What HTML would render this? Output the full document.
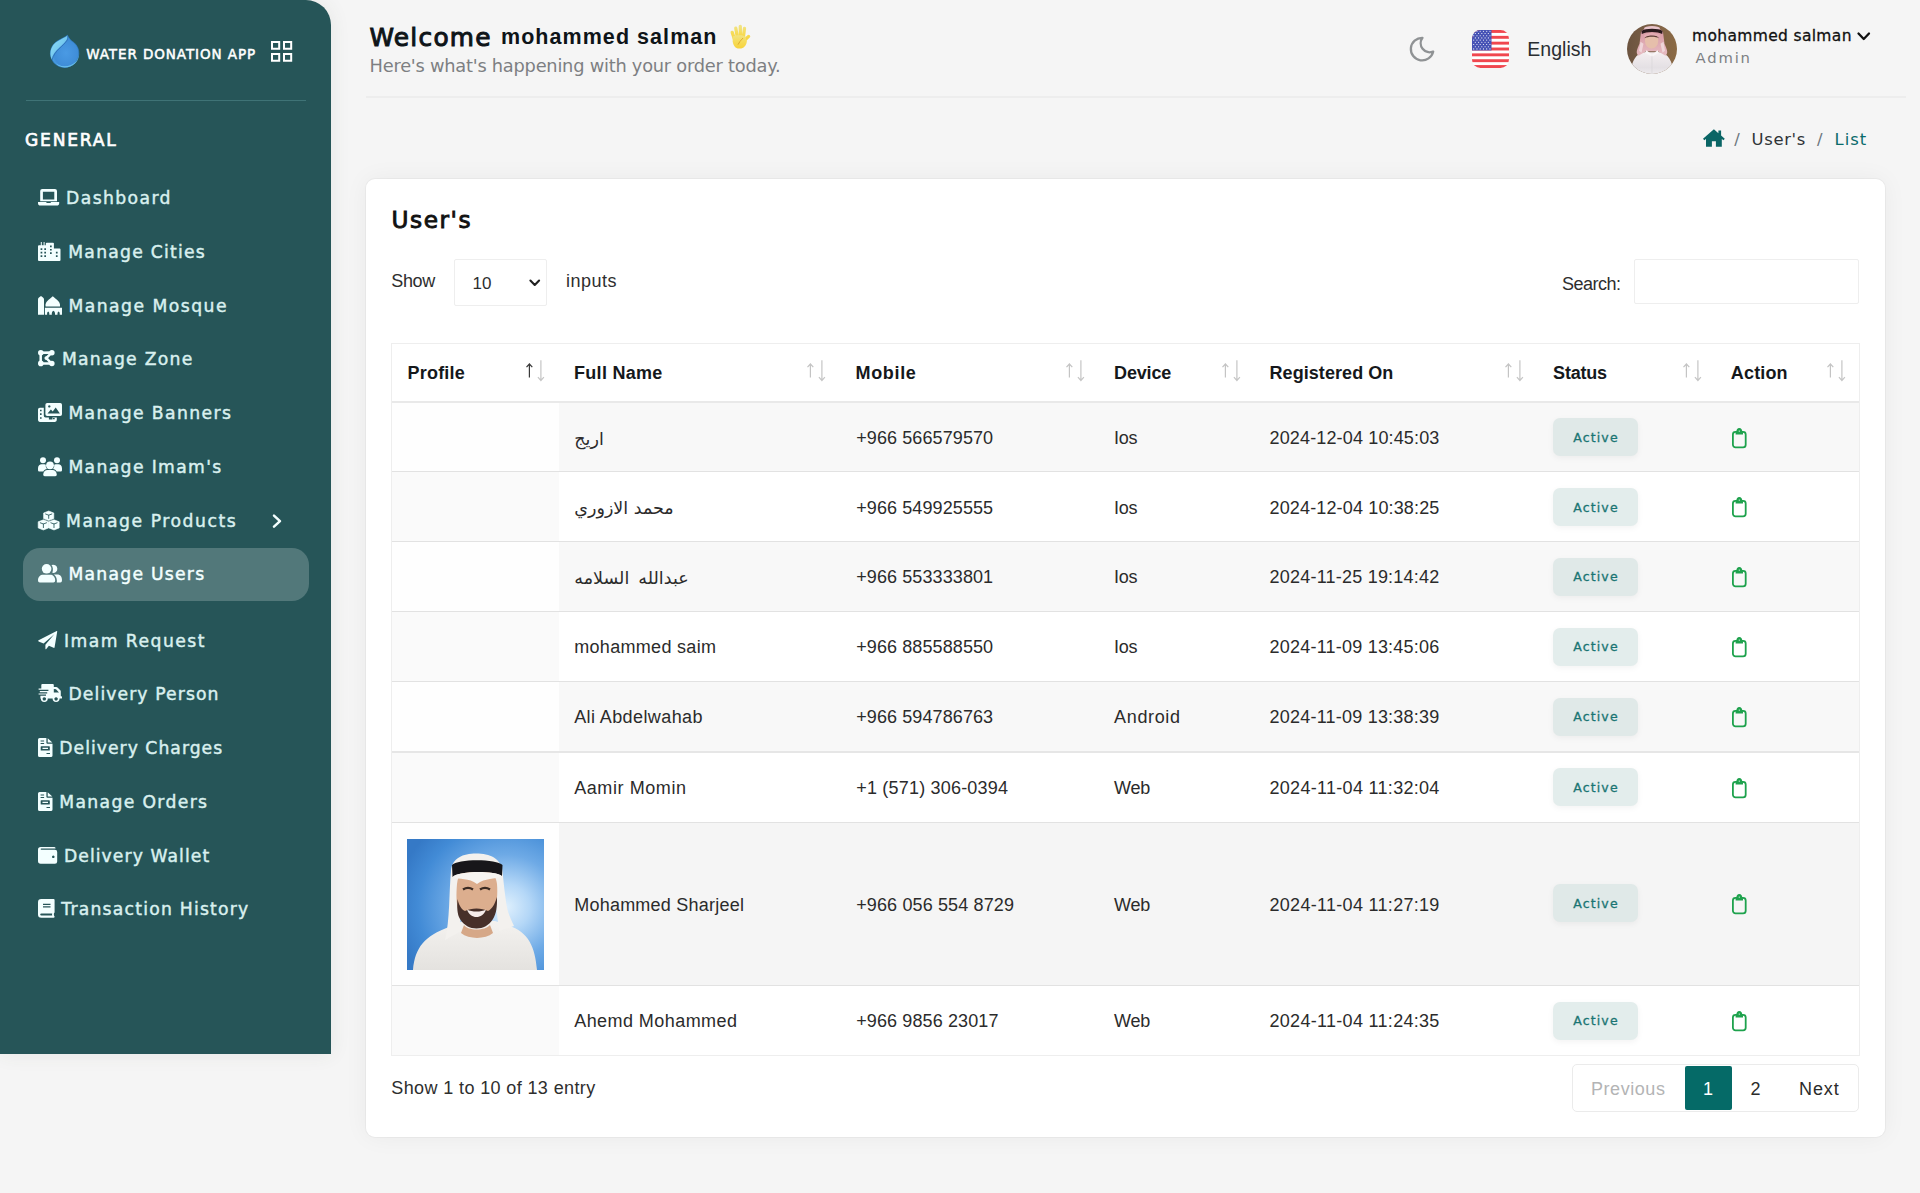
<!DOCTYPE html>
<html lang="en">
<head>
<meta charset="utf-8">
<title>User's List</title>
<style>
*{box-sizing:border-box;margin:0;padding:0}
html,body{width:1920px;height:1193px;overflow:hidden}
body{background:#f5f5f5;font-family:"Liberation Sans","DejaVu Sans",sans-serif;color:#212529;position:relative}
.a{position:absolute;display:block}
.t{position:absolute;white-space:nowrap;display:block}
svg{position:absolute;display:block;overflow:visible}
#sidebar{left:0;top:0;width:331px;height:1054px;background:#265558;border-top-right-radius:25px;box-shadow:0 0 20px rgba(70,80,60,.085)}
#side-hr{left:26px;top:100px;width:280px;height:1px;background:#3f7376}
#pill{left:23px;top:548px;width:286px;height:53px;border-radius:17px;background:#52787a}
.logo{font-family:"DejaVu Sans","Liberation Sans",sans-serif;font-size:13.5px;line-height:16px;font-weight:400;-webkit-text-stroke:.5px #fff;color:#fff}
.gen{font-family:"DejaVu Sans","Liberation Sans",sans-serif;font-size:17.1px;line-height:22px;font-weight:400;-webkit-text-stroke:.65px #fff;color:#fff}
.menu{font-family:"DejaVu Sans","Liberation Sans",sans-serif;font-size:17.2px;line-height:24px;color:#d9f0ef;-webkit-text-stroke:.45px #d9f0ef}
.menu.on{color:#f2ffff;-webkit-text-stroke:.45px #f2ffff}
.ic{fill:#f3ffff}
.welcome{font-family:"DejaVu Sans","Liberation Sans",sans-serif;font-size:24.8px;line-height:32px;font-weight:400;-webkit-text-stroke:1px #0e1418;color:#0e1418}
.wname{font-size:21.5px;line-height:28px;font-weight:700;color:#0e1418}
.wsub{font-family:"DejaVu Sans","Liberation Sans",sans-serif;font-size:17.8px;line-height:22px;color:#7d7f82}
#head-hr{left:366px;top:96px;width:1540px;height:2px;background:#ededed}
.eng{font-size:19.5px;line-height:24px;color:#2a2e31}
.uname{font-family:"DejaVu Sans","Liberation Sans",sans-serif;font-size:15.5px;line-height:20px;color:#111;-webkit-text-stroke:.3px #111}
.urole{font-family:"DejaVu Sans","Liberation Sans",sans-serif;font-size:14.8px;line-height:18px;color:#7d8083}
.bc{font-family:"DejaVu Sans","Liberation Sans",sans-serif;font-size:16.4px;line-height:20px;color:#2f3337}
.bc.on{color:#0a6b6b}
#card{left:366px;top:179px;width:1519px;height:958px;background:#fff;border-radius:9px;box-shadow:0 0 0 1px rgba(0,0,0,.03),0 0 24px rgba(0,0,0,.05)}
.ctitle{font-family:"DejaVu Sans","Liberation Sans",sans-serif;font-size:23.2px;line-height:30px;font-weight:400;-webkit-text-stroke:.9px #111;color:#111}
.lbl{font-size:18px;line-height:22px;color:#2e2e2e}
.box{border:1px solid #eeeeee;border-radius:2px;background:#fff}
#tbl{left:391px;top:343px;width:1469px;height:713px;border:1px solid #eeeeee;background:#fff}
.row{left:392px;width:1467px}
.row.o{background:#f8f8f8}
.row.e{background:#fff}
.row i{position:absolute;left:0;top:0;width:167px;height:100%}
.row.o i{background:#fefefe}
.row.e i{background:#fafafa}
.ln{left:392px;width:1467px;height:1px;background:#e2e2e2}
.th{font-size:18px;line-height:22px;font-weight:700;color:#15181b}
.td{font-size:18px;line-height:22px;color:#2b2b2b}
.ar{font-family:"DejaVu Sans","Liberation Sans",sans-serif;font-size:17.5px;line-height:22px;color:#2b2b2b}
.badge{width:85px;height:38px;border-radius:7px;background:#e3edec;box-shadow:0 2px 6px rgba(0,0,0,.05)}
.badge.d{background:#e0e9e8}
.act{font-family:"DejaVu Sans","Liberation Sans",sans-serif;font-size:12.5px;line-height:16px;color:#1a7573;-webkit-text-stroke:.3px #1a7573}
.pg{font-size:18px;line-height:22px;color:#2b2b2b}
.pg.dis{color:#b3b4b5}
.pg.w{color:#fff}
#pager{left:1571.5px;top:1064px;width:287px;height:48px;border:1px solid #ebebeb;border-radius:5px;background:#fff}
#pg1{left:1684.5px;top:1065.5px;width:47px;height:44.5px;background:#056a67;border-radius:2px}

</style>
</head>
<body>
<aside>
<div id="sidebar" class="a"></div>
<div id="side-hr" class="a"></div>
<div id="pill" class="a"></div>
<svg class="" style="left:49.5px;top:35px" width="29.5" height="33" viewBox="0 0 29.5 33" ><defs>
<radialGradient id="lg1" cx="0.55" cy="0.55" r="0.7"><stop offset="0" stop-color="#4a9ae4"/><stop offset="0.6" stop-color="#3f8dd8"/><stop offset="1" stop-color="#5dbdec"/></radialGradient>
<linearGradient id="lg2" x1="0" y1="0" x2="1" y2="1"><stop offset="0" stop-color="#93def6"/><stop offset="1" stop-color="#5ab6e8"/></linearGradient>
</defs>
<path d="M17.500 0.300C15.500 2 12 3.500 8 5.700A14.200 14.200 0 1 0 21.600 5.900C19.600 4 18.300 2.300 17.500 0.300z" fill="url(#lg1)" stroke="#2f7cc4" stroke-width=".7"/>
<path d="M17.300 0.700C15.300 2.300 12 3.700 8.100 5.900A14.200 14.200 0 0 0 1.700 24.200C3.600 15.600 12.600 11.100 16.500 5.100 17.400 3.600 17.700 2.100 17.300 0.700z" fill="url(#lg2)"/>
<path d="M17.600 1.300C18 3 17.600 4.300 16.900 5.500 13.300 11.300 4.300 15.500 2.100 24.800" fill="none" stroke="#2a66a8" stroke-width=".9" opacity=".75"/>
<path d="M4.600 27C8.500 32.500 20.500 33 26.500 26 27.800 24 28.600 21.500 28.800 19 29.300 27 22.500 32.400 14.700 32.400 10.500 32.400 6.800 30.500 4.600 27z" fill="#79d2f3" opacity=".75"/></svg>
<span class="t logo" style="left:86.2px;top:46.1px;letter-spacing:0.92px;">WATER DONATION APP</span>
<svg class="" style="left:271px;top:41px" width="21.2" height="20.8" viewBox="0 0 21.2 20.2" preserveAspectRatio="none"><path d="M0 0h9.2v8.600H0zM2 2v4.600h5.200V2zM12 0h9.200v8.600H12zM14 2v4.600h5.200V2zM0 11.600h9.200v8.600H0zM2 13.600v4.600h5.200v-4.600zM12 11.600h9.200v8.600H12zM14 13.600v4.600h5.200v-4.600z" fill="#fff" fill-rule="evenodd"/></svg>
<span class="t gen" style="left:25.1px;top:128.8px;letter-spacing:1.76px;">GENERAL</span>
<span class="t menu" style="left:66.1px;top:185.9px;letter-spacing:1.39px;">Dashboard</span>
<span class="t menu" style="left:68.3px;top:239.5px;letter-spacing:1.24px;">Manage Cities</span>
<span class="t menu" style="left:68.4px;top:293.5px;letter-spacing:1.48px;">Manage Mosque</span>
<span class="t menu" style="left:61.9px;top:346.9px;letter-spacing:1.30px;">Manage Zone</span>
<span class="t menu" style="left:68.4px;top:400.7px;letter-spacing:1.39px;">Manage Banners</span>
<span class="t menu" style="left:68.4px;top:454.5px;letter-spacing:1.36px;">Manage Imam&#39;s</span>
<span class="t menu" style="left:66.1px;top:508.5px;letter-spacing:1.55px;">Manage Products</span>
<span class="t menu on" style="left:68.4px;top:561.9px;letter-spacing:1.26px;">Manage Users</span>
<span class="t menu" style="left:63.9px;top:628.5px;letter-spacing:1.48px;">Imam Request</span>
<span class="t menu" style="left:68.5px;top:681.9px;letter-spacing:1.10px;">Delivery Person</span>
<span class="t menu" style="left:59.3px;top:735.9px;letter-spacing:1.03px;">Delivery Charges</span>
<span class="t menu" style="left:59.3px;top:789.5px;letter-spacing:1.35px;">Manage Orders</span>
<span class="t menu" style="left:63.9px;top:843.5px;letter-spacing:1.09px;">Delivery Wallet</span>
<span class="t menu" style="left:61.2px;top:896.9px;letter-spacing:1.23px;">Transaction History</span>
<svg class="" style="left:272.2px;top:514.3px" width="10.6" height="14.3" viewBox="0 0 10.6 14.3" ><path d="M2 1.600l6 5.550-6 5.550" fill="none" stroke="#f3ffff" stroke-width="2.500" stroke-linecap="round" stroke-linejoin="round"/></svg>
<svg class="ic" style="left:38.2px;top:188.9px" width="21.2" height="16.5" viewBox="0 0 21.2 16.5" ><path fill-rule="evenodd" d="M4.300 0h12.600a2.100 2.100 0 0 1 2.100 2.100V12.300H2.200V2.100A2.100 2.100 0 0 1 4.300 0zM4.900 2.700v7.900h11.400V2.700zM0 13h8l.9 1.100h3.400l.9-1.100h8v.9a2.600 2.600 0 0 1-2.600 2.600H2.600A2.600 2.600 0 0 1 0 13.900z"/></svg>
<svg class="ic" style="left:38.2px;top:241.5px" width="23.5" height="19" viewBox="0 0 23.5 19" ><path fill-rule="evenodd" d="M2.800 0h1v3.300h1.800V0h1v3.300h1.200V1.600q0-.9.900-.9h6.300q.9 0 .9.900v5h5.700q.9 0 .9.900V18q0 1-1 1H1q-1 0-1-1V4.300q0-1 1-1h1.800zM2.600 6.300v1.700h1.700V6.300zM6.300 6.300v1.700H8V6.300zM12 3.600v1.700h1.700V3.600zM12 6.900v1.700h1.700V6.900zM2.600 9.800v1.700h1.700V9.800zM6.300 9.800v1.700H8V9.800zM12 10.200v1.700h1.700v-1.700zM17.900 9.800v1.700h1.700V9.800zM2.600 13.300V15h1.700v-1.700zM6.300 13.300V15H8v-1.700zM17.900 13.300V15h1.700v-1.700z"/></svg>
<svg class="ic" style="left:38.2px;top:295.6px" width="24" height="18.8" viewBox="0 0 24 18.8" ><path fill-rule="evenodd" d="M0 18.800V3.600C0 1.700 1.700.900 3 0 4.300.900 6 1.700 6 3.600V18.800zM7.600 10.400C6.800 6 10.900 3.700 14.800.300c3.900 3.400 8 5.700 7.200 10.100zM6.900 11.700h17.100v7.100h-2.300v-1.400q0-1.200-1.100-1.900-1.100.700-1.100 1.900v1.400h-2.500v-1.600q0-1.600-1.600-2.500-1.600.900-1.600 2.500v1.600h-2.500v-1.400q0-1.200-1.100-1.900-1.100.700-1.100 1.900v1.400H6.900z"/></svg>
<svg class="ic" style="left:38.2px;top:350px" width="16.8" height="16.2" viewBox="0 0 16.8 16.2" ><g fill="none" stroke="#f3ffff" stroke-width="2.500"><path d="M2.700 2.800V13.400M2.700 2.700L13.800 2.500M13.700 2.600L8.300 8.100L13.700 13.600M2.700 13.500H13.800"/></g><circle cx="2.800" cy="2.800" r="2.800"/><circle cx="13.900" cy="2.700" r="2.700"/><circle cx="2.800" cy="13.400" r="2.800"/><circle cx="13.900" cy="13.500" r="2.700"/><circle cx="8.400" cy="8.100" r="1.900"/></svg>
<svg class="ic" style="left:38.2px;top:402.6px" width="24" height="18.9" viewBox="0 0 24 18.9" ><path fill-rule="evenodd" d="M9.200 0h13q1.800 0 1.800 1.800v9.400q0 1.800-1.800 1.800h-13q-1.800 0-1.800-1.800V1.800Q7.400 0 9.200 0zM11.300 2.200a1.200 1.200 0 1 0 .01 0zM9.500 10.600h12.400l-4.200-6.200-3 4.200-1.800-2zM1.800 4.700h4v8.100q0 1.800 1.800 1.800h3.300v1.800h3.500v-1.800h4.400v2.500q0 1.800-1.800 1.800H1.800Q0 18.900 0 17.100V6.500Q0 4.700 1.800 4.700zM2 6.700v1.600h1.600V6.700zM2 10.300v1.600h1.600v-1.600zM2 14.200v1.600h1.600v-1.600zM14.900 15v1.300h1.800V15z"/></svg>
<svg class="ic" style="left:38.2px;top:456.5px" width="24" height="19.2" viewBox="0 0 24 19.2" ><circle cx="5" cy="3.300" r="3"/><circle cx="19" cy="3.300" r="3"/><circle cx="12" cy="8.300" r="3.900"/><path d="M0 11.300C0 8.600 1.800 7.300 3.600 7.300h2.800q.9 0 1.500.4c-.5 1.700.1 3.200 1.100 4.200-1.600.2-2.900 1.100-3.700 2.600H1.200Q0 14.500 0 13.300zM24 11.300c0-2.700-1.800-4-3.600-4h-2.800q-.9 0-1.500.4c.5 1.700-.1 3.200-1.100 4.200 1.600.2 2.900 1.100 3.700 2.600h4.100q1.200 0 1.200-1.200zM5.200 17.800c0-3 2-4.900 4.400-4.900h4.800c2.400 0 4.400 1.900 4.400 4.900q0 1.400-1.500 1.400H6.700q-1.500 0-1.500-1.400z"/></svg>
<svg class="ic" style="left:38.2px;top:510.6px" width="21.4" height="19" viewBox="0 0 21.4 19" ><path d="M10.700 0l5.100 2v5.600l-5.100 2-5.100-2V2zM5.400 8.800l5.200 2v6.100l-5.200 2.100L.2 16.900V10.800zM16 8.800l5.200 2v6.100L16 19l-5.200-2.100V10.800z" stroke="#f3ffff" stroke-width=".6" stroke-linejoin="round"/><g fill="none" stroke="#265558" stroke-width=".85" stroke-linecap="round"><path d="M7.600 3l3.100 1.200 3.100-1.200M10.700 4.200V7.400M2.300 11.800l3.100 1.200 3.100-1.200M5.400 13v3.600M12.900 11.800l3.100 1.200 3.100-1.200M16 13v3.600"/></g></svg>
<svg class="ic" style="left:38.2px;top:564px" width="24" height="18.5" viewBox="0 0 24 18.5" ><circle cx="8.600" cy="4.800" r="4.800"/><path d="M14.300 8.800a4.100 4.100 0 1 0-.8-7.700c1.600 2 1.900 5.200.8 7.700zM0 16.400c0-3.700 2.500-5.600 5-5.600h7.200c2.500 0 5 1.900 5 5.600q0 2.100-1.800 2.100H1.800Q0 18.500 0 16.400zM18.800 18.500c.5-3.100-.5-6.300-2.900-8.100h3.600c2.600 0 4.500 2.100 4.500 5.800q0 2.300-1.700 2.300z"/></svg>
<svg class="ic" style="left:38.2px;top:631px" width="19.2" height="18.4" viewBox="0 0 19.2 18.400" ><path d="M18.700.1Q19.400-.2 19.200.7L16.600 16.300q-.2.900-1 .5L10.900 14.800 8.300 18q-.7.800-.9-.3V13.800L16.300 3.200 5.600 12.500.6 10.400q-1-.5 0-1.100z"/></svg>
<svg class="ic" style="left:38.2px;top:683.8px" width="24" height="18.7" viewBox="0 0 24 18.7" ><path fill-rule="evenodd" d="M4.300 0h10.500q1 0 1 1v2h2.500q.7 0 1.200.5l2.800 2.800q.5.500.5 1.200v4.700h.6q.6 0 .6.600v1.200q0 .6-.6.600h-1.800a3.500 3.500 0 0 1-7 0h-4.800a3.500 3.500 0 0 1-7 0H2.400V11.800H8V10.600H.6V9.400H9.200V8.200H1.800V7H10.400V5.800H.6V4.600H3.300V1q0-1 1-1zM15.800 5V8.400h5.200L18 5.300zM6.300 13.200a1.700 1.700 0 1 0 .01 0zM18.100 13.200a1.700 1.700 0 1 0 .01 0z"/></svg>
<svg class="ic" style="left:38.2px;top:738px" width="14.5" height="19" viewBox="0 0 14.5 19" ><path fill-rule="evenodd" d="M1.600 0H8.400V4.700q0 1 1 1h5.100V17.400q0 1.600-1.600 1.600H1.600Q0 19 0 17.400V1.600Q0 0 1.600 0zM9.700 0.300L14.300 4.600H9.700zM2.600 2.600v1h3.500v-1zM2.600 5v1h3.500V5zM3.300 8.200q-.6 0-.6.600V12q0 .6.600.6h7.900q.6 0 .6-.6V8.800q0-.6-.6-.6zM4.500 9.700h5.500v1.400H4.500zM8.500 15v1h3.500v-1z"/></svg>
<svg class="ic" style="left:38.2px;top:791.7px" width="14.5" height="19" viewBox="0 0 14.5 19" ><path fill-rule="evenodd" d="M1.600 0H8.400V4.700q0 1 1 1h5.100V17.400q0 1.600-1.600 1.600H1.600Q0 19 0 17.400V1.600Q0 0 1.600 0zM9.700 0.300L14.300 4.600H9.700zM2.600 2.600v1h3.500v-1zM2.600 5v1h3.500V5zM3.300 8.200q-.6 0-.6.600V12q0 .6.600.6h7.900q.6 0 .6-.6V8.800q0-.6-.6-.6zM4.500 9.700h5.500v1.400H4.500zM8.500 15v1h3.500v-1z"/></svg>
<svg class="ic" style="left:38.2px;top:847px" width="19.2" height="16.7" viewBox="0 0 19.2 16.700" ><path fill-rule="evenodd" d="M2.800 0H16q1.600 0 1.600 1.500H3.300q-.7 0-.7.600t.7.600H17q2.200 0 2.200 2.200v9.600q0 2.200-2.200 2.200H2.600Q0 16.700 0 14.100V2.800Q0 0 2.800 0zM15.300 8.500a1.300 1.300 0 1 0 .01 0z"/></svg>
<svg class="ic" style="left:38.2px;top:899px" width="16.6" height="18.7" viewBox="0 0 16.600 18.700" ><path fill-rule="evenodd" d="M3.300 0H15.600q1 0 1 1V13.200q0 .7-.5.900c-.3.700-.3 2 0 2.700q.5.300.5.900 0 1-1 1H3.300Q0 18.700 0 15.400V3.300Q0 0 3.300 0zM5 4.700v1.200h7.500V4.700zM5 7.300v1.200h7.500V7.300zM3.400 14.400q-1.200 0-1.200 1.100t1.200 1.100H14.200c-.2-.7-.2-1.500 0-2.200z"/></svg>
</aside>
<header>
<span class="t welcome" style="left:369.5px;top:21.8px;letter-spacing:1.26px;">Welcome</span>
<span class="t wname" style="left:501px;top:22.9px;letter-spacing:1.05px;">mohammed salman</span>
<svg class="" style="left:730px;top:23.7px" width="20.6" height="24.6" viewBox="0 0 20.600 24.600" role="img" aria-label="waving hand"><title>&#128075;</title><defs><linearGradient id="hg" x1="0" y1="0" x2="0" y2="1"><stop offset="0" stop-color="#f1e383"/><stop offset=".45" stop-color="#f6dc5a"/><stop offset="1" stop-color="#f7d33c"/></linearGradient></defs><g stroke="url(#hg)" stroke-width="3.300" stroke-linecap="round" fill="none"><path d="M2.200 8.400L4.600 15.500M5.800 4.200L7.300 13M10.300 2.300L10.400 13M14.500 4.500L13.300 13.500M18.600 12.400L14 16.800"/></g><path d="M2.700 12.500C6 11 12 10.500 15.500 12.500L16.800 17.500C16.500 21.500 13.500 24.600 10 24.600H8.800C5.500 24.600 3.200 21.500 2.700 17.500z" fill="url(#hg)"/><path d="M12.800 14.300L10 17.400 8.200 20.300" fill="none" stroke="#dba62a" stroke-width=".9" stroke-linecap="round"/></svg>
<span class="t wsub" style="left:369.6px;top:54.7px;letter-spacing:-0.23px;">Here&#39;s what&#39;s happening with your order today.</span>
<div id="head-hr" class="a"></div>
<svg class="" style="left:1409px;top:36px" width="26" height="26" viewBox="0 0 26 26" ><path d="M13.500 1.800A11.300 11.300 0 1 0 24.200 15.500 9 9 0 0 1 13.500 1.800z" fill="none" stroke="#8f9294" stroke-width="2.300" stroke-linejoin="round"/></svg>
<svg class="" style="left:1472px;top:30px" width="37" height="38" viewBox="0 0 37 38" ><defs><clipPath id="fc"><rect x="0" y="0" width="37" height="38" rx="8.500"/></clipPath></defs><g clip-path="url(#fc)"><rect width="37" height="38" fill="#fff"/><rect x="0" y="0.00" width="37" height="2.92" fill="#f0474f"/><rect x="0" y="5.85" width="37" height="2.92" fill="#f0474f"/><rect x="0" y="11.69" width="37" height="2.92" fill="#f0474f"/><rect x="0" y="17.54" width="37" height="2.92" fill="#f0474f"/><rect x="0" y="23.38" width="37" height="2.92" fill="#f0474f"/><rect x="0" y="29.23" width="37" height="2.92" fill="#f0474f"/><rect x="0" y="35.08" width="37" height="2.92" fill="#f0474f"/><rect x="0" y="0" width="19.500" height="20.460" fill="#4652b5"/><circle cx="1.70" cy="1.30" r=".55" fill="#fff"/><circle cx="4.95" cy="1.30" r=".55" fill="#fff"/><circle cx="8.20" cy="1.30" r=".55" fill="#fff"/><circle cx="11.45" cy="1.30" r=".55" fill="#fff"/><circle cx="14.70" cy="1.30" r=".55" fill="#fff"/><circle cx="17.95" cy="1.30" r=".55" fill="#fff"/><circle cx="3.32" cy="3.50" r=".55" fill="#fff"/><circle cx="6.57" cy="3.50" r=".55" fill="#fff"/><circle cx="9.82" cy="3.50" r=".55" fill="#fff"/><circle cx="13.07" cy="3.50" r=".55" fill="#fff"/><circle cx="16.32" cy="3.50" r=".55" fill="#fff"/><circle cx="1.70" cy="5.70" r=".55" fill="#fff"/><circle cx="4.95" cy="5.70" r=".55" fill="#fff"/><circle cx="8.20" cy="5.70" r=".55" fill="#fff"/><circle cx="11.45" cy="5.70" r=".55" fill="#fff"/><circle cx="14.70" cy="5.70" r=".55" fill="#fff"/><circle cx="17.95" cy="5.70" r=".55" fill="#fff"/><circle cx="3.32" cy="7.90" r=".55" fill="#fff"/><circle cx="6.57" cy="7.90" r=".55" fill="#fff"/><circle cx="9.82" cy="7.90" r=".55" fill="#fff"/><circle cx="13.07" cy="7.90" r=".55" fill="#fff"/><circle cx="16.32" cy="7.90" r=".55" fill="#fff"/><circle cx="1.70" cy="10.10" r=".55" fill="#fff"/><circle cx="4.95" cy="10.10" r=".55" fill="#fff"/><circle cx="8.20" cy="10.10" r=".55" fill="#fff"/><circle cx="11.45" cy="10.10" r=".55" fill="#fff"/><circle cx="14.70" cy="10.10" r=".55" fill="#fff"/><circle cx="17.95" cy="10.10" r=".55" fill="#fff"/><circle cx="3.32" cy="12.30" r=".55" fill="#fff"/><circle cx="6.57" cy="12.30" r=".55" fill="#fff"/><circle cx="9.82" cy="12.30" r=".55" fill="#fff"/><circle cx="13.07" cy="12.30" r=".55" fill="#fff"/><circle cx="16.32" cy="12.30" r=".55" fill="#fff"/><circle cx="1.70" cy="14.50" r=".55" fill="#fff"/><circle cx="4.95" cy="14.50" r=".55" fill="#fff"/><circle cx="8.20" cy="14.50" r=".55" fill="#fff"/><circle cx="11.45" cy="14.50" r=".55" fill="#fff"/><circle cx="14.70" cy="14.50" r=".55" fill="#fff"/><circle cx="17.95" cy="14.50" r=".55" fill="#fff"/><circle cx="3.32" cy="16.70" r=".55" fill="#fff"/><circle cx="6.57" cy="16.70" r=".55" fill="#fff"/><circle cx="9.82" cy="16.70" r=".55" fill="#fff"/><circle cx="13.07" cy="16.70" r=".55" fill="#fff"/><circle cx="16.32" cy="16.70" r=".55" fill="#fff"/><circle cx="1.70" cy="18.90" r=".55" fill="#fff"/><circle cx="4.95" cy="18.90" r=".55" fill="#fff"/><circle cx="8.20" cy="18.90" r=".55" fill="#fff"/><circle cx="11.45" cy="18.90" r=".55" fill="#fff"/><circle cx="14.70" cy="18.90" r=".55" fill="#fff"/><circle cx="17.95" cy="18.90" r=".55" fill="#fff"/></g></svg>
<span class="t eng" style="left:1527.3px;top:36.8px;letter-spacing:0.02px;">English</span>
<svg class="" style="left:1627px;top:23.8px" width="50" height="50" viewBox="0 0 50 50" ><defs><clipPath id="ac"><circle cx="25" cy="25" r="25"/></clipPath>
<linearGradient id="ag" x1="0" y1="0" x2="1" y2="0"><stop offset="0" stop-color="#6b533f"/><stop offset=".5" stop-color="#7d6148"/><stop offset="1" stop-color="#8b6a44"/></linearGradient>
<linearGradient id="ab" x1="0" y1="0" x2="0" y2="1"><stop offset="0" stop-color="#f4eef0"/><stop offset=".6" stop-color="#e4e0e4"/><stop offset="1" stop-color="#f4f2f4"/></linearGradient>
<linearGradient id="as" x1="0" y1="0" x2="0" y2="1"><stop offset="0" stop-color="#d595a0"/><stop offset="1" stop-color="#e7bcc2"/></linearGradient></defs>
<g clip-path="url(#ac)"><rect width="50" height="50" fill="url(#ag)"/><g transform="translate(0,-4.200)">
<path d="M3 58C4 42 8 35 16 32.500L34 32.500C42 35 46 42 47 58z" fill="url(#ab)"/>
<path d="M14 12.500C16 6.500 34 6.500 36 12.500L37.500 24C39.500 29 42 33 38.500 36L31 31.500H19L11.500 36C8 33 10.500 29 12.500 24z" fill="url(#as)"/>
<path d="M13.500 22L12 31 14.500 33 16.500 24zM36.500 22L38 31 35.500 33 33.500 24z" fill="#f2dfe2" opacity=".8"/>
<ellipse cx="25" cy="8.800" rx="8" ry="2.700" fill="#e9c4cb"/>
<ellipse cx="24.600" cy="21" rx="6.700" ry="7.800" fill="#e6bfab"/>
<path d="M17.600 18.500C19 14 30.500 14 32 18.500 29 16.500 21 16.500 17.600 18.500z" fill="#5a3a34"/>
<path d="M17 15.500C19 12.500 31 12.500 33 15.500L32.500 17.500C29 15 21 15 17.500 17.500z" fill="#e2aab2"/>
<path d="M14.500 11.300C18 8.300 32 8.300 35.500 11.300L35.200 14.200C31 11.500 19 11.500 14.800 14.200z" fill="#2a1a1d"/>
<path d="M19.500 30.500L25 35 30.500 30.500 32 33 25 37 18 33z" fill="#f8f5f6"/>
<path d="M25 36V56" stroke="#d9d5d9" stroke-width=".7"/>
</g></g></svg>
<span class="t uname" style="left:1692px;top:26.2px;letter-spacing:0.34px;">mohammed salman</span>
<svg class="" style="left:1856.5px;top:32.4px" width="13.5" height="9" viewBox="0 0 13.500 9" ><path d="M1.500 1.500l5.250 5.500 5.250-5.500" fill="none" stroke="#111" stroke-width="2.300" stroke-linecap="round" stroke-linejoin="round"/></svg>
<span class="t urole" style="left:1695.6px;top:48.7px;letter-spacing:1.81px;">Admin</span>
<svg class="" style="left:1702.5px;top:129.3px" width="21.8" height="17.8" viewBox="0 0 21.800 17.800" ><path d="M10.900 0.300L0 9.800l1.300 1.500 1.700-1.400V17.800h5.900v-5.600h4v5.600h5.900V9.900l1.700 1.400 1.300-1.500-3.700-3.200V1.600h-2.700v2.700z" fill="#0a6565"/></svg>
<span class="t bc" style="left:1734.3px;top:129.8px;color:#6c757d;">/</span>
<span class="t bc" style="left:1751.5px;top:129.8px;letter-spacing:0.68px;">User&#39;s</span>
<span class="t bc" style="left:1817px;top:129.8px;color:#6c757d;">/</span>
<span class="t bc on" style="left:1834.6px;top:129.8px;letter-spacing:1.01px;">List</span>
</header>
<main>
<div id="card" class="a"></div>
<span class="t ctitle" style="left:391.5px;top:205.3px;letter-spacing:1.54px;">User&#39;s</span>
<span class="t lbl" style="left:391.3px;top:269.5px;letter-spacing:-0.38px;">Show</span>
<div class="a box" style="left:454px;top:259px;width:93px;height:47px"></div>
<span class="t lbl" style="left:472.5px;top:272.5px;font-size:17px;">10</span>
<svg class="" style="left:529px;top:278.5px" width="11.5" height="8" viewBox="0 0 11.500 8" ><path d="M1.400 1.500l4.350 4.500 4.350-4.500" fill="none" stroke="#222" stroke-width="2.100" stroke-linecap="round" stroke-linejoin="round"/></svg>
<span class="t lbl" style="left:566px;top:269.5px;letter-spacing:0.47px;">inputs</span>
<span class="t lbl" style="left:1562.1px;top:273.4px;letter-spacing:-0.52px;">Search:</span>
<div class="a box" style="left:1634px;top:259px;width:225px;height:45px"></div>
<div id="tbl" class="a"></div>
<div class="a row o" style="top:402px;height:69px"><i></i></div>
<div class="a row e" style="top:471px;height:70px"><i></i></div>
<div class="a row o" style="top:541px;height:70px"><i></i></div>
<div class="a row e" style="top:611px;height:70px"><i></i></div>
<div class="a row o" style="top:681px;height:70px"><i></i></div>
<div class="a row e" style="top:751px;height:71px"><i></i></div>
<div class="a row o" style="top:822px;height:163px;background:#f5f5f5"><i></i></div>
<div class="a row e" style="top:985px;height:70px"><i></i></div>
<div class="a ln" style="top:402px;top:401px;height:2px;background:#e9e9e9"></div>
<div class="a ln" style="top:471px"></div>
<div class="a ln" style="top:541px"></div>
<div class="a ln" style="top:611px"></div>
<div class="a ln" style="top:681px"></div>
<div class="a ln" style="top:751px;height:2px;background:#e6e6e6"></div>
<div class="a ln" style="top:822px"></div>
<div class="a ln" style="top:985px"></div>
<span class="t th" style="left:407.5px;top:362.2px;letter-spacing:0.21px;">Profile</span>
<svg style="left:526px;top:359px" width="20" height="23" viewBox="0 0 20 23"><path d="M3.400 18.600V5.200M0.500 8.200L3.400 5 6.300 8.200" fill="none" stroke="#3a3a3a" stroke-width="1.200"/><path d="M14.900 1.200V21.300M11.900 18.200L14.900 21.500 17.900 18.200" fill="none" stroke="#c6c6c6" stroke-width="1.200"/></svg>
<span class="t th" style="left:574.1px;top:362.2px;letter-spacing:0.27px;">Full Name</span>
<svg style="left:807px;top:359px" width="20" height="23" viewBox="0 0 20 23"><path d="M3.400 18.600V5.200M0.500 8.200L3.400 5 6.300 8.200" fill="none" stroke="#c4c4c4" stroke-width="1.200"/><path d="M14.900 1.200V21.300M11.900 18.200L14.900 21.500 17.900 18.200" fill="none" stroke="#c6c6c6" stroke-width="1.200"/></svg>
<span class="t th" style="left:855.6px;top:362.2px;letter-spacing:0.64px;">Mobile</span>
<svg style="left:1066px;top:359px" width="20" height="23" viewBox="0 0 20 23"><path d="M3.400 18.600V5.200M0.500 8.200L3.400 5 6.300 8.200" fill="none" stroke="#c4c4c4" stroke-width="1.200"/><path d="M14.900 1.200V21.300M11.900 18.200L14.900 21.500 17.900 18.200" fill="none" stroke="#c6c6c6" stroke-width="1.200"/></svg>
<span class="t th" style="left:1114.1px;top:362.2px;letter-spacing:-0.17px;">Device</span>
<svg style="left:1221.7px;top:359px" width="20" height="23" viewBox="0 0 20 23"><path d="M3.400 18.600V5.200M0.500 8.200L3.400 5 6.300 8.200" fill="none" stroke="#c4c4c4" stroke-width="1.200"/><path d="M14.900 1.200V21.300M11.900 18.200L14.900 21.500 17.900 18.200" fill="none" stroke="#c6c6c6" stroke-width="1.200"/></svg>
<span class="t th" style="left:1269.5px;top:362.2px;letter-spacing:0.07px;">Registered On</span>
<svg style="left:1505px;top:359px" width="20" height="23" viewBox="0 0 20 23"><path d="M3.400 18.600V5.200M0.500 8.200L3.400 5 6.300 8.200" fill="none" stroke="#c4c4c4" stroke-width="1.200"/><path d="M14.900 1.200V21.300M11.900 18.200L14.900 21.500 17.900 18.200" fill="none" stroke="#c6c6c6" stroke-width="1.200"/></svg>
<span class="t th" style="left:1553.1px;top:362.2px;letter-spacing:-0.22px;">Status</span>
<svg style="left:1683px;top:359px" width="20" height="23" viewBox="0 0 20 23"><path d="M3.400 18.600V5.200M0.500 8.200L3.400 5 6.300 8.200" fill="none" stroke="#c4c4c4" stroke-width="1.200"/><path d="M14.900 1.200V21.300M11.900 18.200L14.900 21.500 17.900 18.200" fill="none" stroke="#c6c6c6" stroke-width="1.200"/></svg>
<span class="t th" style="left:1730.8px;top:362.2px;letter-spacing:0.16px;">Action</span>
<svg style="left:1826.5px;top:359px" width="20" height="23" viewBox="0 0 20 23"><path d="M3.400 18.600V5.200M0.500 8.200L3.400 5 6.300 8.200" fill="none" stroke="#c4c4c4" stroke-width="1.200"/><path d="M14.900 1.200V21.300M11.900 18.200L14.900 21.500 17.900 18.200" fill="none" stroke="#c6c6c6" stroke-width="1.200"/></svg>
<span class="t ar" style="left:574.3px;top:427.5px;direction:rtl;">&#1575;&#1585;&#1610;&#1580;</span>
<span class="t td" style="left:856.2px;top:426.9px;letter-spacing:0.10px;">+966 566579570</span>
<span class="t td" style="left:1114.1px;top:426.9px;letter-spacing:-0.26px;">Ios</span>
<span class="t td" style="left:1269.5px;top:426.9px;letter-spacing:0.15px;">2024-12-04 10:45:03</span>
<div class="a badge d" style="left:1553px;top:418.2px"></div>
<span class="t act" style="left:1573.2px;top:430px;letter-spacing:1.15px;">Active</span>
<svg style="left:1731.700px;top:427.7px" width="14.6" height="20.2" viewBox="0 0 14.600 20.200"><rect x=".9" y="3.900" width="12.800" height="15.400" rx="2.600" fill="none" stroke="#1ea24d" stroke-width="1.800"/><path d="M3.600 6.400V4.700Q3.600 3.800 4.500 3.700A2.900 2.900 0 1 1 10.100 3.700Q11 3.800 11 4.700V6.400z" fill="#1ea24d"/><circle cx="7.300" cy="3.100" r=".7" fill="#dff7e8"/></svg>
<span class="t ar" style="left:574.3px;top:497.1px;direction:rtl;">&#1605;&#1581;&#1605;&#1583; &#1575;&#1604;&#1575;&#1586;&#1608;&#1585;&#1610;</span>
<span class="t td" style="left:856.2px;top:496.5px;letter-spacing:0.10px;">+966 549925555</span>
<span class="t td" style="left:1114.1px;top:496.5px;letter-spacing:-0.26px;">Ios</span>
<span class="t td" style="left:1269.5px;top:496.5px;letter-spacing:0.15px;">2024-12-04 10:38:25</span>
<div class="a badge" style="left:1553px;top:487.8px"></div>
<span class="t act" style="left:1573.2px;top:499.6px;letter-spacing:1.15px;">Active</span>
<svg style="left:1731.700px;top:497.3px" width="14.6" height="20.2" viewBox="0 0 14.600 20.200"><rect x=".9" y="3.900" width="12.800" height="15.400" rx="2.600" fill="none" stroke="#1ea24d" stroke-width="1.800"/><path d="M3.600 6.400V4.700Q3.600 3.800 4.500 3.700A2.900 2.900 0 1 1 10.100 3.700Q11 3.800 11 4.700V6.400z" fill="#1ea24d"/><circle cx="7.300" cy="3.100" r=".7" fill="#dff7e8"/></svg>
<span class="t ar" style="left:574.3px;top:566.9px;direction:rtl;word-spacing:3.5px;">&#1593;&#1576;&#1583;&#1575;&#1604;&#1604;&#1607; &#1575;&#1604;&#1587;&#1604;&#1575;&#1605;&#1607;</span>
<span class="t td" style="left:856.2px;top:566.3px;letter-spacing:0.10px;">+966 553333801</span>
<span class="t td" style="left:1114.1px;top:566.3px;letter-spacing:-0.26px;">Ios</span>
<span class="t td" style="left:1269.5px;top:566.3px;letter-spacing:0.22px;">2024-11-25 19:14:42</span>
<div class="a badge d" style="left:1553px;top:557.6px"></div>
<span class="t act" style="left:1573.2px;top:569.4px;letter-spacing:1.15px;">Active</span>
<svg style="left:1731.700px;top:567.1px" width="14.6" height="20.2" viewBox="0 0 14.600 20.200"><rect x=".9" y="3.900" width="12.800" height="15.400" rx="2.600" fill="none" stroke="#1ea24d" stroke-width="1.800"/><path d="M3.600 6.400V4.700Q3.600 3.800 4.500 3.700A2.900 2.900 0 1 1 10.100 3.700Q11 3.800 11 4.700V6.400z" fill="#1ea24d"/><circle cx="7.300" cy="3.100" r=".7" fill="#dff7e8"/></svg>
<span class="t td" style="left:574.2px;top:636.2px;letter-spacing:0.31px;">mohammed saim</span>
<span class="t td" style="left:856.2px;top:636.2px;letter-spacing:0.10px;">+966 885588550</span>
<span class="t td" style="left:1114.1px;top:636.2px;letter-spacing:-0.26px;">Ios</span>
<span class="t td" style="left:1269.5px;top:636.2px;letter-spacing:0.22px;">2024-11-09 13:45:06</span>
<div class="a badge" style="left:1553px;top:627.5px"></div>
<span class="t act" style="left:1573.2px;top:639.3px;letter-spacing:1.15px;">Active</span>
<svg style="left:1731.700px;top:637px" width="14.6" height="20.2" viewBox="0 0 14.600 20.200"><rect x=".9" y="3.900" width="12.800" height="15.400" rx="2.600" fill="none" stroke="#1ea24d" stroke-width="1.800"/><path d="M3.600 6.400V4.700Q3.600 3.800 4.500 3.700A2.900 2.900 0 1 1 10.100 3.700Q11 3.800 11 4.700V6.400z" fill="#1ea24d"/><circle cx="7.300" cy="3.100" r=".7" fill="#dff7e8"/></svg>
<span class="t td" style="left:574.2px;top:706.2px;letter-spacing:0.40px;">Ali Abdelwahab</span>
<span class="t td" style="left:856.2px;top:706.2px;letter-spacing:0.10px;">+966 594786763</span>
<span class="t td" style="left:1114.1px;top:706.2px;letter-spacing:0.64px;">Android</span>
<span class="t td" style="left:1269.5px;top:706.2px;letter-spacing:0.22px;">2024-11-09 13:38:39</span>
<div class="a badge d" style="left:1553px;top:697.5px"></div>
<span class="t act" style="left:1573.2px;top:709.3px;letter-spacing:1.15px;">Active</span>
<svg style="left:1731.700px;top:707px" width="14.6" height="20.2" viewBox="0 0 14.600 20.200"><rect x=".9" y="3.900" width="12.800" height="15.400" rx="2.600" fill="none" stroke="#1ea24d" stroke-width="1.800"/><path d="M3.600 6.400V4.700Q3.600 3.800 4.500 3.700A2.900 2.900 0 1 1 10.100 3.700Q11 3.800 11 4.700V6.400z" fill="#1ea24d"/><circle cx="7.300" cy="3.100" r=".7" fill="#dff7e8"/></svg>
<span class="t td" style="left:574.2px;top:776.9px;letter-spacing:0.58px;">Aamir Momin</span>
<span class="t td" style="left:856.2px;top:776.9px;letter-spacing:0.20px;">+1 (571) 306-0394</span>
<span class="t td" style="left:1114.1px;top:776.9px;letter-spacing:-0.24px;">Web</span>
<span class="t td" style="left:1269.5px;top:776.9px;letter-spacing:0.30px;">2024-11-04 11:32:04</span>
<div class="a badge" style="left:1553px;top:768.2px"></div>
<span class="t act" style="left:1573.2px;top:780px;letter-spacing:1.15px;">Active</span>
<svg style="left:1731.700px;top:777.7px" width="14.6" height="20.2" viewBox="0 0 14.600 20.200"><rect x=".9" y="3.900" width="12.800" height="15.400" rx="2.600" fill="none" stroke="#1ea24d" stroke-width="1.800"/><path d="M3.600 6.400V4.700Q3.600 3.800 4.500 3.700A2.900 2.900 0 1 1 10.100 3.700Q11 3.800 11 4.700V6.400z" fill="#1ea24d"/><circle cx="7.300" cy="3.100" r=".7" fill="#dff7e8"/></svg>
<span class="t td" style="left:574.2px;top:893.9px;letter-spacing:0.23px;">Mohammed Sharjeel</span>
<span class="t td" style="left:856.2px;top:893.9px;letter-spacing:0.13px;">+966 056 554 8729</span>
<span class="t td" style="left:1114.1px;top:893.9px;letter-spacing:-0.24px;">Web</span>
<span class="t td" style="left:1269.5px;top:893.9px;letter-spacing:0.30px;">2024-11-04 11:27:19</span>
<div class="a badge d" style="left:1553px;top:884.2px"></div>
<span class="t act" style="left:1573.2px;top:896px;letter-spacing:1.15px;">Active</span>
<svg style="left:1731.700px;top:893.7px" width="14.6" height="20.2" viewBox="0 0 14.600 20.200"><rect x=".9" y="3.900" width="12.800" height="15.400" rx="2.600" fill="none" stroke="#1ea24d" stroke-width="1.800"/><path d="M3.600 6.400V4.700Q3.600 3.800 4.500 3.700A2.900 2.900 0 1 1 10.100 3.700Q11 3.800 11 4.700V6.400z" fill="#1ea24d"/><circle cx="7.300" cy="3.100" r=".7" fill="#dff7e8"/></svg>
<span class="t td" style="left:574.2px;top:1010.2px;letter-spacing:0.44px;">Ahemd Mohammed</span>
<span class="t td" style="left:856.2px;top:1010.2px;letter-spacing:0.12px;">+966 9856 23017</span>
<span class="t td" style="left:1114.1px;top:1010.2px;letter-spacing:-0.24px;">Web</span>
<span class="t td" style="left:1269.5px;top:1010.2px;letter-spacing:0.30px;">2024-11-04 11:24:35</span>
<div class="a badge" style="left:1553px;top:1001.5px"></div>
<span class="t act" style="left:1573.2px;top:1013.3px;letter-spacing:1.15px;">Active</span>
<svg style="left:1731.700px;top:1011px" width="14.6" height="20.2" viewBox="0 0 14.600 20.200"><rect x=".9" y="3.900" width="12.800" height="15.400" rx="2.600" fill="none" stroke="#1ea24d" stroke-width="1.800"/><path d="M3.600 6.400V4.700Q3.600 3.800 4.500 3.700A2.900 2.900 0 1 1 10.100 3.700Q11 3.800 11 4.700V6.400z" fill="#1ea24d"/><circle cx="7.300" cy="3.100" r=".7" fill="#dff7e8"/></svg>
<svg class="" style="left:407px;top:839px" width="137" height="131" viewBox="0 0 137 131" ><defs>
<radialGradient id="pg" cx=".72" cy=".52" r=".8"><stop offset="0" stop-color="#dff0fd"/><stop offset=".22" stop-color="#b4d7f7"/><stop offset=".5" stop-color="#6eaae6"/><stop offset=".8" stop-color="#428bd6"/><stop offset="1" stop-color="#3579c6"/></radialGradient>
<linearGradient id="rb" x1="0" y1="0" x2="0" y2="1"><stop offset="0" stop-color="#f4f2ef"/><stop offset="1" stop-color="#e4e2df"/></linearGradient>
<clipPath id="pc"><rect width="137" height="131"/></clipPath></defs>
<g clip-path="url(#pc)"><rect width="137" height="131" fill="url(#pg)"/>
<path d="M6 131C8 108 18 97 42 88L56 82H88L100 86C122 93 128 108 130 131z" fill="url(#rb)"/>
<path d="M44 32C45 19 56 14.500 69 14.500c14 0 25 5 26.500 17.500 1 11 2.500 24 4 34 1.500 9 5 15 7.500 21L92 92 88 58H52L54 92 38 101C43 82 42 52 44 32z" fill="#f3f1ee"/>
<path d="M50 45C51 33 59 30 69.500 30s19.500 3 20.500 15c.8 10 0 20-3 28-3 9-10 14.500-17.500 14.500S55 82 52 73c-3-8-2.800-18-2-28z" fill="#dcae8e"/>
<path d="M50.500 60c1.500 6 3.500 10 7.500 12 6-3.500 17-3.500 23 0 4-2 6.500-6 9-14 .3 10-.8 17-4 22-4 6.500-10 9.500-16.500 9.500S57 86.500 53 80c-3-5-3-12-2.500-20z" fill="#47302a"/>
<path d="M60 70.500c5 2.800 14 2.800 19 0-2 5.500-5.500 7.500-9.500 7.500s-7.500-2-9.500-7.500z" fill="#f5ecea"/>
<path d="M56 50.500c3-2 7-2 10 0M73 50.500c3-2 7-2 10 0" stroke="#3a2a22" stroke-width="2.300" fill="none"/>
<path d="M45 26C50 19.500 90 19.500 95.500 26L95 37C89 31.500 51 31.500 45.500 38z" fill="#17161a"/>
<path d="M46 38C52 31.500 88 31.500 94.500 37 88 41 78 38.500 70 45 62 38.500 52 41 46 38z" fill="#f6f4f1"/>
<path d="M57 86c4 6 21 6 26 0l3 8c-8 6.500-24 6.500-32 0z" fill="#d6a888"/>
</g></svg>
<span class="t lbl" style="left:391.3px;top:1076.8px;letter-spacing:0.38px;">Show 1 to 10 of 13 entry</span>
<div id="pager" class="a"></div>
<div id="pg1" class="a"></div>
<span class="t pg dis" style="left:1591px;top:1077.6px;letter-spacing:0.55px;">Previous</span>
<span class="t pg w" style="left:1703px;top:1077.6px;">1</span>
<span class="t pg" style="left:1750.4px;top:1077.6px;">2</span>
<span class="t pg" style="left:1799px;top:1077.6px;letter-spacing:0.93px;">Next</span>
</main>
</body>
</html>
